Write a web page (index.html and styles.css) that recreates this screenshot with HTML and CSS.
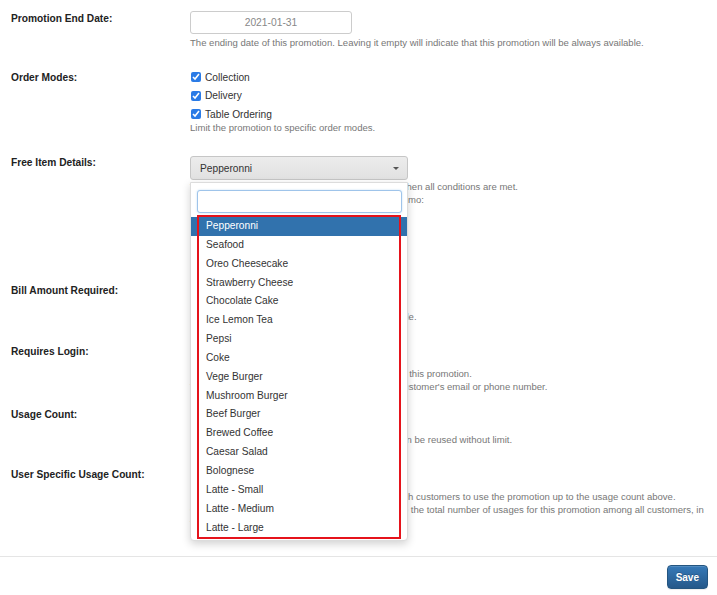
FILE: index.html
```html
<!DOCTYPE html>
<html lang="en">
<head>
    <meta charset="UTF-8">
    <meta name="viewport" content="width=device-width, initial-scale=1.0">
    <title>Edit Promotion</title>
    <link rel="stylesheet" href="styles.css">
</head>
<body>
    <form class="promo-form">
        <div class="form-body">
            <div class="form-group">
                <label class="control-label">Promotion End Date:</label>
                <div class="controls">
                    <input type="text" class="form-control date-input" value="2021-01-31">
                    <p class="help-block">The ending date of this promotion. Leaving it empty will indicate that this promotion will be always available.</p>
                </div>
            </div>

            <div class="form-group">
                <label class="control-label">Order Modes:</label>
                <div class="controls">
                    <div class="check-list">
                        <label class="check"><input type="checkbox" checked>Collection</label>
                        <label class="check"><input type="checkbox" checked>Delivery</label>
                        <label class="check"><input type="checkbox" checked>Table Ordering</label>
                    </div>
                    <p class="help-block">Limit the promotion to specific order modes.</p>
                </div>
            </div>

            <div class="form-group">
                <label class="control-label">Free Item Details:</label>
                <div class="controls">
                    <div class="select-wrap">
                        <div class="select-toggle">
                            <span>Pepperonni</span>
                            <span class="caret"></span>
                        </div>
                        <!-- open item picker -->
                        <div class="dropdown">
                            <div class="dropdown-search">
                                <input type="text">
                            </div>
                            <ul class="results">
                                <li class="active">Pepperonni</li>
                                <li>Seafood</li>
                                <li>Oreo Cheesecake</li>
                                <li>Strawberry Cheese</li>
                                <li>Chocolate Cake</li>
                                <li>Ice Lemon Tea</li>
                                <li>Pepsi</li>
                                <li>Coke</li>
                                <li>Vege Burger</li>
                                <li>Mushroom Burger</li>
                                <li>Beef Burger</li>
                                <li>Brewed Coffee</li>
                                <li>Caesar Salad</li>
                                <li>Bolognese</li>
                                <li>Latte - Small</li>
                                <li>Latte - Medium</li>
                                <li>Latte - Large</li>
                            </ul>
                            <div class="pick-outline"></div>
                        </div>
                    </div>
                    <p class="help-block">The chosen item will be added to the cart for free when all conditions are met.<br>Items which customers can choose from for this promo:</p>
                    <input type="text" class="form-control qty-input">
                    <textarea class="form-control note-input"></textarea>
                </div>
            </div>

            <div class="form-group">
                <label class="control-label">Bill Amount Required:</label>
                <div class="controls">
                    <input type="text" class="form-control tall">
                    <p class="help-block">Minimum Bill Amount. Leave it Blank if not Applicable.</p>
                </div>
            </div>

            <div class="form-group compact">
                <label class="control-label">Requires Login:</label>
                <div class="controls">
                    <div class="single-check"><input type="checkbox"></div>
                    <p class="help-block">Users will need to be logged in before they can use this promotion.<br>The usage of each customer is tracked using the customer's email or phone number.</p>
                </div>
            </div>

            <div class="form-group">
                <label class="control-label">Usage Count:</label>
                <div class="controls">
                    <input type="text" class="form-control">
                    <p class="help-block">Leave it blank or set it to 0 so that the promotion can be reused without limit.</p>
                </div>
            </div>

            <div class="form-group">
                <label class="control-label">User Specific Usage Count:</label>
                <div class="controls">
                    <div class="single-check"><input type="checkbox"></div>
                    <p class="help-block">If checked, the limit will apply per user, allowing each customers to use the promotion up to the usage count above.<br>Otherwise, the usage count above will be applied to the total number of usages for this promotion among all customers, in total.</p>
                </div>
            </div>
        </div>

        <div class="form-footer">
            <button type="submit" class="btn-primary">Save</button>
        </div>
    </form>
</body>
</html>
```

FILE: styles.css
```css
body {
    margin: 0;
    background: #fff;
    color: #333;
    font-family: "Liberation Sans", Arial, sans-serif;
    font-size: 10.2px;
}
.form-body {
    padding: 11px 9px 27px 11px;
}
.form-group {
    display: grid;
    grid-template-columns: 179px 1fr;
    margin-bottom: 21px;
}
.form-group:last-child {
    margin-bottom: 0;
}
.form-group.compact {
    margin-bottom: 14px;
}
.control-label {
    font-weight: bold;
    color: #222;
    line-height: 14px;
    padding-top: 1px;
}
.help-block {
    margin: 2px 0 0;
    font-size: 9.55px;
    line-height: 13px;
    color: #777;
}
.form-control {
    display: block;
    box-sizing: border-box;
    width: 218px;
    height: 24px;
    padding: 0 8px;
    border: 1px solid #ccc;
    border-radius: 3px;
    background: #fff;
    font: inherit;
    color: #333;
}
.form-control.tall {
    height: 25px;
}
.qty-input {
    margin-top: 4px;
}
.note-input {
    height: 26px;
    margin-top: 2px;
    resize: none;
}
.date-input {
    width: 162px;
    height: 23px;
    text-align: center;
    color: #888;
    font-size: 10.3px;
}

/* checkboxes */
.check-list {
    margin-top: -2px;
}
.check {
    display: flex;
    align-items: center;
    gap: 4px;
    height: 18.5px;
}
.check input,
.single-check input {
    width: 10px;
    height: 10px;
    margin: 0 0 0 1px;
    accent-color: #2a7be6;
}
.check-list + .help-block {
    margin-top: -2.5px;
}
.single-check {
    display: flex;
    align-items: center;
    height: 21px;
}

/* item select */
.select-wrap {
    position: relative;
    width: 218px;
    margin-top: 1px;
}
.select-wrap + .help-block {
    margin-top: 0;
}
.select-toggle {
    box-sizing: border-box;
    height: 24px;
    display: flex;
    align-items: center;
    justify-content: space-between;
    padding: 0 8px 0 9px;
    border: 1px solid #c6c6c6;
    border-radius: 3px;
    background: linear-gradient(#ececec, #e1e1e1);
}
.caret {
    width: 0;
    height: 0;
    border-left: 3px solid transparent;
    border-right: 3px solid transparent;
    border-top: 3.5px solid #555;
}
.dropdown {
    position: absolute;
    top: 26px;
    left: 0;
    z-index: 10;
    width: 218px;
    box-sizing: border-box;
    background: #fff;
    border: 1px solid #dcdcdc;
    border-radius: 0 0 4px 4px;
    box-shadow: 0 3px 8px rgba(0,0,0,0.18);
}
.dropdown-search {
    padding: 7px 5px 4px 6px;
}
.dropdown-search input {
    display: block;
    box-sizing: border-box;
    width: 100%;
    height: 23px;
    border: 1px solid #9fc4ea;
    border-radius: 3px;
    box-shadow: 0 0 2px rgba(102,175,233,0.45);
    outline: none;
}
.results {
    list-style: none;
    margin: 0;
    padding: 0 0 3px;
}
.results li {
    height: 18.85px;
    line-height: 18.85px;
    padding-left: 15px;
    color: #333;
}
.results li.active {
    background: #3172ad;
    color: #fff;
}
.pick-outline {
    position: absolute;
    left: 6px;
    top: 32px;
    width: 204px;
    height: 324px;
    box-sizing: border-box;
    border: 2px solid #e5131b;
    pointer-events: none;
}

/* footer */
.form-footer {
    display: flex;
    justify-content: flex-end;
    padding: 8px 9px 6px;
    border-top: 1px solid #e5e5e5;
}
.btn-primary {
    height: 24px;
    padding: 0 8px;
    border: 1px solid #245580;
    border-radius: 4px;
    background: linear-gradient(#3679b8, #25588a);
    color: #fff;
    font: bold 10px "Liberation Sans", Arial, sans-serif;
    text-shadow: 0 -1px 0 rgba(0,0,0,0.2);
    box-shadow: inset 0 1px 0 rgba(255,255,255,0.15), 0 1px 1px rgba(0,0,0,0.075);
    cursor: pointer;
}
```
